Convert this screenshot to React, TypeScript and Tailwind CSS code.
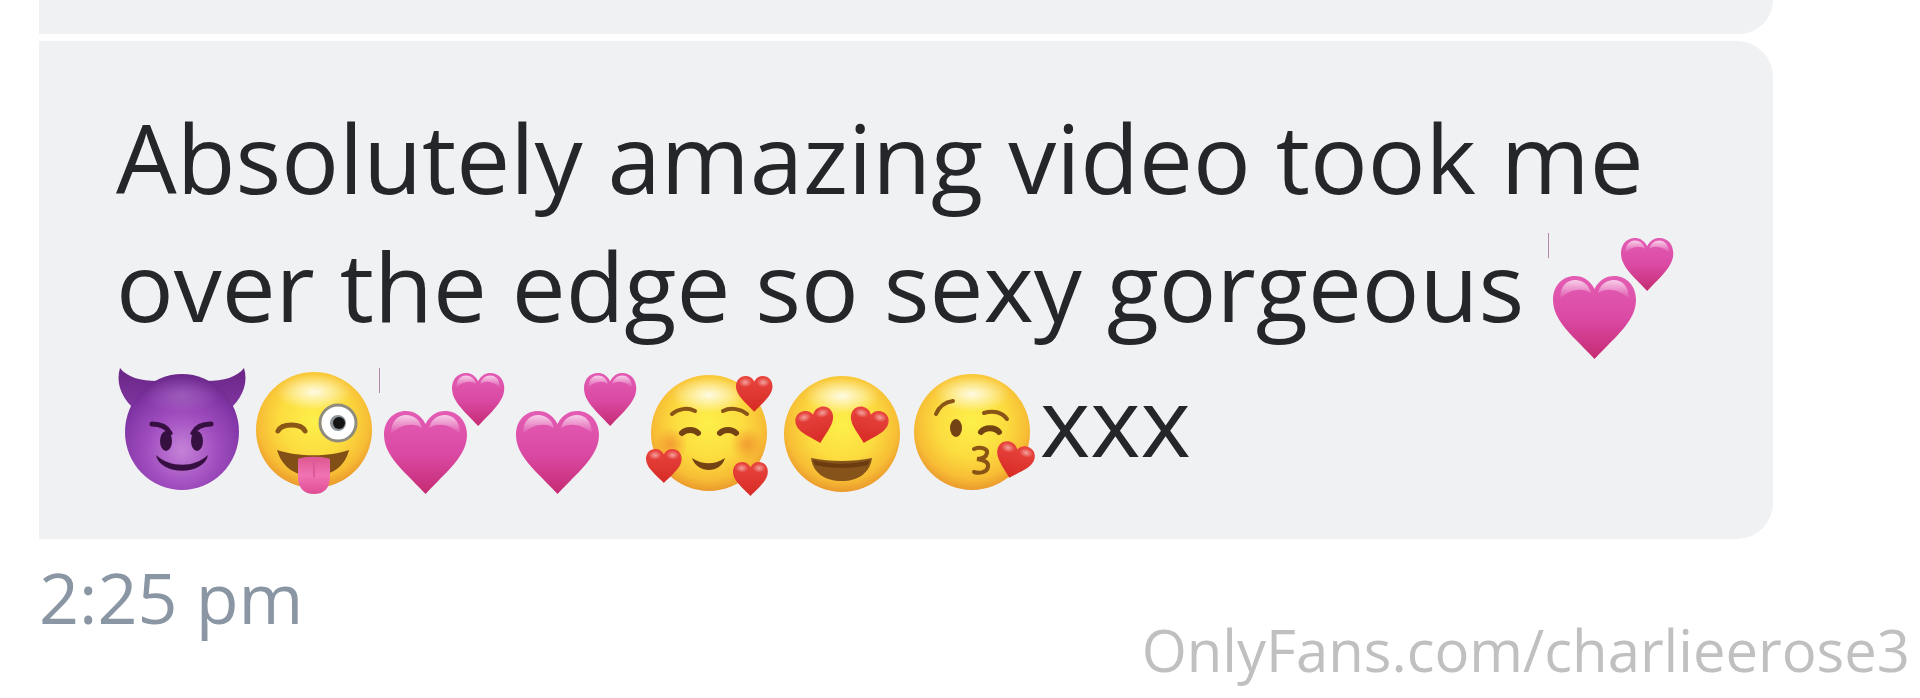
import type { ReactNode } from 'react';

const HEART =
  'M41.5 13C37 4 30 0 22 0C9 0 0 10 0 24C0 38 9 49 20 61C28 69 35 76 41.5 83C48 76 55 69 63 61C74 49 83 38 83 24C83 10 74 0 61 0C53 0 46 4 41.5 13Z';

function Emoji({ label, children }: { label: string; children: ReactNode }) {
  return (
    <svg
      role="img"
      aria-label={label}
      viewBox="0 0 132 132"
      className="inline-block w-[132px] h-[132px] -my-5 align-[-22px] overflow-visible"
    >
      {children}
    </svg>
  );
}

function Gradients() {
  return (
    <svg className="absolute w-0 h-0" aria-hidden="true">
      <defs>
        <radialGradient id="face" cx="0.5" cy="0.42" r="0.6">
          <stop offset="0" stopColor="#fdf04a" />
          <stop offset="0.5" stopColor="#fcdc3f" />
          <stop offset="0.8" stopColor="#f7bd35" />
          <stop offset="1" stopColor="#e8922a" />
        </radialGradient>
        <linearGradient id="shine" x1="0" y1="0" x2="0" y2="1">
          <stop offset="0" stopColor="#fff" stopOpacity="0.7" />
          <stop offset="1" stopColor="#fff" stopOpacity="0" />
        </linearGradient>
        <radialGradient id="glow">
          <stop offset="0" stopColor="#fff" stopOpacity="0.85" />
          <stop offset="1" stopColor="#fff" stopOpacity="0" />
        </radialGradient>
        <radialGradient id="devil" cx="0.5" cy="0.66" r="0.66">
          <stop offset="0" stopColor="#c583d8" />
          <stop offset="0.45" stopColor="#a24fc0" />
          <stop offset="0.8" stopColor="#8437a8" />
          <stop offset="1" stopColor="#6a2789" />
        </radialGradient>
        <linearGradient id="horn" x1="0" y1="0" x2="0" y2="1">
          <stop offset="0" stopColor="#6a2585" />
          <stop offset="1" stopColor="#7f35a0" />
        </linearGradient>
        <linearGradient id="pink" x1="0" y1="0" x2="0" y2="1">
          <stop offset="0" stopColor="#e35cb4" />
          <stop offset="0.5" stopColor="#db4aa5" />
          <stop offset="1" stopColor="#c52b72" />
        </linearGradient>
        <linearGradient id="red" x1="0" y1="0" x2="0" y2="1">
          <stop offset="0" stopColor="#e9453e" />
          <stop offset="1" stopColor="#d72a25" />
        </linearGradient>
        <linearGradient id="tongue" x1="0" y1="0" x2="0" y2="1">
          <stop offset="0" stopColor="#dd5790" />
          <stop offset="0.5" stopColor="#f173b4" />
          <stop offset="1" stopColor="#e04c93" />
        </linearGradient>
        <radialGradient id="blush">
          <stop offset="0" stopColor="#f0842c" stopOpacity="0.65" />
          <stop offset="1" stopColor="#f0842c" stopOpacity="0" />
        </radialGradient>
      </defs>
    </svg>
  );
}

function Face({ cx, cy }: { cx: number; cy: number }) {
  return (
    <>
      <circle cx={cx} cy={cy} r="58" fill="url(#face)" />
      <ellipse cx={cx} cy={cy - 38} rx="38" ry="18" fill="url(#glow)" />
    </>
  );
}

function RedHeart({ transform }: { transform: string }) {
  return (
    <g transform={transform}>
      <path d={HEART} fill="url(#red)" />
      <ellipse cx="21" cy="15" rx="15" ry="11" fill="url(#glow)" opacity="0.6" />
      <ellipse cx="62" cy="15" rx="15" ry="11" fill="url(#glow)" opacity="0.6" />
    </g>
  );
}

function PinkHeart({ transform }: { transform: string }) {
  return (
    <g transform={transform}>
      <path d={HEART} fill="url(#pink)" />
      <path d="M7 23C7 10 14 4 22 4C30 4 36 9 38 17C30 11 16 13 7 23Z" fill="url(#shine)" />
      <path d="M45 17C47 9 53 4 61 4C69 4 76 10 76 23C67 13 53 11 45 17Z" fill="url(#shine)" />
    </g>
  );
}

function TwoHearts({ edge = false }: { edge?: boolean }) {
  return (
    <Emoji label="💕">
      {edge && <rect x="-1" y="1" width="1" height="25" fill="#b58bab" />}
      <PinkHeart transform="translate(4 44)" />
      <PinkHeart transform="translate(72 6) scale(0.63 0.64)" />
    </Emoji>
  );
}

function Devil() {
  return (
    <Emoji label="😈">
      <path d="M4 1C11 10 24 14 42 14L16 40C4 28 0 14 4 1Z" fill="url(#horn)" />
      <path d="M128 1C121 10 108 14 90 14L116 40C128 28 132 14 128 1Z" fill="url(#horn)" />
      <ellipse cx="66" cy="65" rx="57" ry="58" fill="url(#devil)" />
      <ellipse cx="66" cy="28" rx="38" ry="18" fill="url(#glow)" opacity="0.18" />
      <g fill="#371042">
        <ellipse cx="50" cy="74" rx="6" ry="10" />
        <ellipse cx="81" cy="74" rx="6" ry="10" />
        <path d="M40 88C54 101 78 101 92 88C88 109 44 109 40 88Z" />
      </g>
      <g fill="none" stroke="#371042" strokeWidth="5" strokeLinecap="round">
        <path d="M36 57C44 57 51 60 54 66" />
        <path d="M95 57C87 57 80 60 77 66" />
      </g>
    </Emoji>
  );
}

function WinkTongue() {
  return (
    <Emoji label="😜">
      <Face cx={66} cy={63} />
      <path d="M30 64C34 56 53 56 57 64" fill="none" stroke="#8a5716" strokeWidth="5" strokeLinecap="round" />
      <circle cx="90" cy="56" r="18" fill="#fff" stroke="#8f8c7d" strokeWidth="3" />
      <circle cx="90" cy="56" r="8" fill="#8d9499" />
      <circle cx="91" cy="56" r="6" fill="#151515" />
      <path d="M29 83C50 90 81 90 101 83C97 100 83 109 65 109C47 109 34 100 29 83Z" fill="#825017" />
      <path d="M50 92C56 89 76 89 82 92V110C82 121 76 127 66 127C56 127 50 121 50 110Z" fill="url(#tongue)" />
      <path d="M66 94V110" stroke="#dc5a98" strokeWidth="2" />
    </Emoji>
  );
}

function SmilingHearts() {
  return (
    <Emoji label="🥰">
      <Face cx={65} cy={66} />
      <circle cx="27" cy="77" r="17" fill="url(#blush)" />
      <circle cx="103" cy="77" r="17" fill="url(#blush)" />
      <g fill="none" stroke="#8a5416" strokeWidth="4" strokeLinecap="round">
        <path d="M28 47C34 42 43 40 51 44" />
        <path d="M79 44C87 40 97 42 103 47" />
      </g>
      <g fill="none" stroke="#744313" strokeWidth="6" strokeLinecap="round">
        <path d="M38 66C42 62 50 62 54 66" />
        <path d="M76 66C80 62 88 62 92 66" />
      </g>
      <path d="M48 91C58 98 71 98 81 91C77 107 53 107 48 91Z" fill="#744313" />
      <RedHeart transform="translate(92 9) scale(0.44 0.43)" />
      <RedHeart transform="translate(2 82) scale(0.43 0.41)" />
      <RedHeart transform="translate(89 95) scale(0.42 0.41)" />
    </Emoji>
  );
}

function HeartEyes() {
  return (
    <Emoji label="😍">
      <Face cx={66} cy={67} />
      <RedHeart transform="translate(40 59) rotate(-14) scale(0.46 0.42) translate(-41.5 -41.5)" />
      <RedHeart transform="translate(92 59) rotate(14) scale(0.46 0.42) translate(-41.5 -41.5)" />
      <path d="M35 91C54 95 77 95 96 91C94 106 82 114 66 114C49 114 37 106 35 91Z" fill="#86541a" />
      <path d="M37 93C55 98 77 98 94 93L92 98C76 102 56 102 39 98Z" fill="#6c3c10" />
    </Emoji>
  );
}

function Kiss() {
  return (
    <Emoji label="😘">
      <Face cx={64} cy={65} />
      <g fill="none" stroke="#8a5416" strokeWidth="4" strokeLinecap="round">
        <path d="M28 47C31 40 37 35 45 34" />
        <path d="M76 46C85 43 94 45 99 52" />
        <path d="M66 82C73 79 80 82 79 86C78 91 73 92 69 92C76 93 81 95 80 100C79 105 72 107 66 105" />
      </g>
      <path d="M73 65C77 60 87 60 91 65" fill="none" stroke="#744313" strokeWidth="6" strokeLinecap="round" />
      <ellipse cx="48" cy="61" rx="6" ry="9" fill="#744313" />
      <RedHeart transform="translate(106 94) rotate(16) scale(0.46 0.42) translate(-41.5 -41.5)" />
    </Emoji>
  );
}

export default function App() {
  return (
    <main className="bg-white font-['Open_Sans','Noto_Sans',sans-serif]">
      <Gradients />
      <div className="pl-[39px] pr-[147px]">
        <div className="h-[34px] rounded-br-[36px] bg-[#f0f1f3]" />
        <div className="mt-[7px] rounded-r-[36px] bg-[#f0f1f3] px-[77px] pt-[52px] pb-[48px]">
          <p className="text-[96px] leading-[128px] text-[#242629]">
            Absolutely amazing video took me over the edge so sexy gorgeous <TwoHearts edge />
            {' '}
            <Devil />
            <WinkTongue />
            <TwoHearts edge />
            <TwoHearts />
            <SmilingHearts />
            <HeartEyes />
            <Kiss />
            <span className="leading-[142px]">xxx</span>
          </p>
        </div>
      </div>
      <div className="flex items-start justify-between pl-[39px] pr-2.5">
        <time className="mt-2 text-[70px] leading-[100px] text-[#8a96a3]">2:25 pm</time>
        <a href="#profile" className="mt-[71px] text-[58px] leading-[80px] text-[#c0c0c0]">
          OnlyFans.com/charlieerose3
        </a>
      </div>
    </main>
  );
}
